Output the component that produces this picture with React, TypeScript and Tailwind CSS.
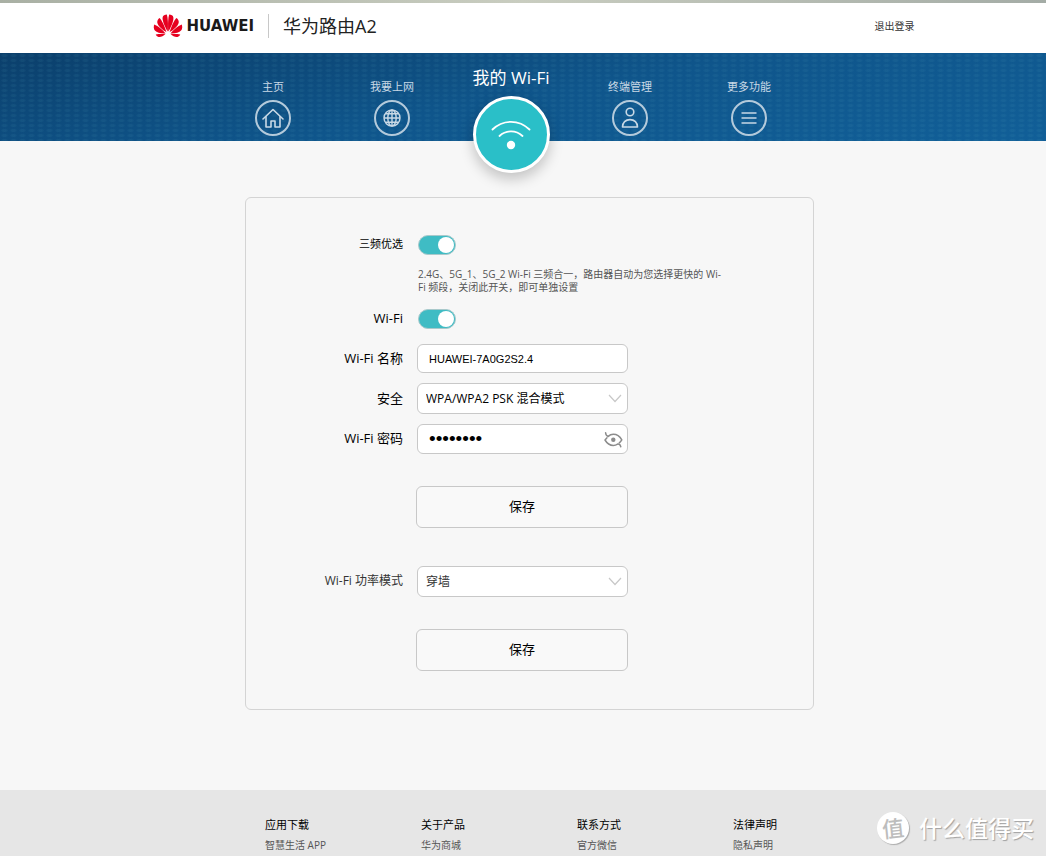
import React from 'react';

const NAV_ITEMS = [
  { label: '主页', icon: 'home' },
  { label: '我要上网', icon: 'globe' },
  { label: '我的 Wi-Fi', icon: 'wifi' },
  { label: '终端管理', icon: 'user' },
  { label: '更多功能', icon: 'menu' },
];

const FOOTER_COLUMNS = [
  { title: '应用下载', link: '智慧生活 APP' },
  { title: '关于产品', link: '华为商城' },
  { title: '联系方式', link: '官方微信' },
  { title: '法律声明', link: '隐私声明' },
];

const HuaweiMark: React.FC = () => (
  <svg width="30" height="24" viewBox="0 0 30 24" fill="#e6001f" aria-hidden="true">
    <path d="M14.7 17.6C12 13 9.2 6.8 9.6 3.4C9.9 1.5 12 .7 13.8 .6C15 4 15.2 12 14.7 17.6Z" />
    <path d="M15.3 17.6C18 13 20.8 6.8 20.4 3.4C20.1 1.5 18 .7 16.2 .6C15 4 14.8 12 15.3 17.6Z" />
    <path d="M13.4 18.2C10 16.3 5 12.4 4.3 8.8C4 6.6 5 4.9 6.7 4C9.2 7.2 12 13 13.4 18.2Z" />
    <path d="M16.6 18.2C20 16.3 25 12.4 25.7 8.8C26 6.6 25 4.9 23.3 4C20.8 7.2 18 13 16.6 18.2Z" />
    <path d="M12.6 19.4C9 19.8 3.8 18.9 1.9 16.6C.5 14.7 .5 12.3 1.3 10.4C5 11.9 9.8 15.8 12.6 19.4Z" />
    <path d="M17.4 19.4C21 19.8 26.2 18.9 28.1 16.6C29.5 14.7 29.5 12.3 28.7 10.4C25 11.9 20.2 15.8 17.4 19.4Z" />
    <path d="M12.4 20.2C10.3 22 7.5 23.5 5.5 22.9C4.1 22.5 3.2 21.5 2.7 20.4C5.8 20 9.4 20 12.4 20.2Z" />
    <path d="M17.6 20.2C19.7 22 22.5 23.5 24.5 22.9C25.9 22.5 26.8 21.5 27.3 20.4C24.2 20 20.6 20 17.6 20.2Z" />
  </svg>
);

const NavIcon: React.FC<{ name: string }> = ({ name }) => {
  if (name === 'home') {
    return (
      <svg width="22" height="20" viewBox="0 0 22 20" fill="none" stroke="currentColor" strokeWidth="1.6" strokeLinejoin="round" strokeLinecap="round">
        <path d="M1 11L11 1.5L21 11" />
        <path d="M4 8.8V19H9V13H13V19H18V8.8" />
      </svg>
    );
  }
  if (name === 'globe') {
    return (
      <svg width="18" height="18" viewBox="0 0 18 18" fill="none" stroke="currentColor" strokeWidth="1.4">
        <circle cx="9" cy="9" r="8" />
        <ellipse cx="9" cy="9" rx="4.2" ry="8" />
        <path d="M9 1V17M1 9H17M2.4 4.8H15.6M2.4 13.2H15.6" />
      </svg>
    );
  }
  if (name === 'user') {
    return (
      <svg width="18" height="22" viewBox="0 0 18 22" fill="none" stroke="currentColor" strokeWidth="1.6" strokeLinejoin="round">
        <circle cx="9" cy="5" r="3.8" />
        <path d="M1.5 20C1.5 15.6 4.6 12.6 9 12.6C13.4 12.6 16.5 15.6 16.5 20Z" />
      </svg>
    );
  }
  if (name === 'menu') {
    return (
      <svg width="16" height="14" viewBox="0 0 16 14" fill="none" stroke="currentColor" strokeWidth="1.7">
        <path d="M.5 2H15.5M.5 7H15.5M.5 12H15.5" />
      </svg>
    );
  }
  return (
    <svg width="40" height="32" viewBox="0 0 40 32" fill="none" stroke="currentColor" strokeWidth="1.8" strokeLinecap="round">
      <path d="M1.5 10.5C12 .2 28 .2 38.5 10.5" />
      <path d="M8.5 17C15 10.8 25 10.8 31.5 17" />
      <circle cx="20" cy="26" r="4.2" fill="currentColor" stroke="none" />
    </svg>
  );
};

const NavItem: React.FC<{ label: string; icon: string }> = ({ label, icon }) => {
  if (icon === 'wifi') {
    return (
      <a href="#wifi" aria-current="page" className="-mb-8 flex flex-1 flex-col items-center pt-[13px] text-white">
        <span className="text-[17px] leading-6 whitespace-nowrap">{label}</span>
        <span className="mt-[6px] flex size-[77px] items-center justify-center rounded-full border-[3px] border-white bg-[#2abfc8] shadow-[0_6px_14px_rgba(0,0,0,0.22)]">
          <NavIcon name={icon} />
        </span>
      </a>
    );
  }
  return (
    <a href={`#${icon}`} className="flex flex-1 flex-col items-center pt-[26px] text-[#c9d9e6]">
      <span className="text-[11px] leading-4 whitespace-nowrap">{label}</span>
      <span className="mt-[5px] flex size-9 items-center justify-center rounded-full border-2 border-[#b4cadb]">
        <NavIcon name={icon} />
      </span>
    </a>
  );
};

const Row: React.FC<{ id?: string; label?: string; labelClass?: string; className?: string; children: React.ReactNode }> = ({
  id,
  label,
  labelClass = 'text-[13px]',
  className = '',
  children,
}) => (
  <div className={`flex items-center ${className}`}>
    {label ? (
      <label htmlFor={id} className={`w-[157px] shrink-0 pb-[2px] text-right leading-5 ${labelClass}`}>
        {label}
      </label>
    ) : (
      <div className="w-[157px] shrink-0" />
    )}
    <div className="ml-[13px] w-[212px]">{children}</div>
  </div>
);

const Toggle: React.FC<{ id: string }> = ({ id }) => (
  <input
    id={id}
    type="checkbox"
    role="switch"
    defaultChecked
    className="ml-[2px] block h-5 w-[38px] cursor-pointer appearance-none rounded-full border border-[#a9c9cb] bg-[#b8b8b8] px-px before:block before:size-4 before:translate-y-px before:rounded-full before:bg-white checked:bg-[#3fbcc4] checked:before:ml-auto"
  />
);

const SelectBox: React.FC<{ id: string; option: string; className: string }> = ({ id, option, className }) => (
  <div className="relative ml-px">
    <select
      id={id}
      className={`block h-[31px] w-full appearance-none rounded-md border border-[#c8c8c8] bg-white pr-8 pl-2 text-xs ${className}`}
    >
      <option>{option}</option>
    </select>
    <svg width="14" height="9" viewBox="0 0 14 9" fill="none" stroke="#c8c8c8" strokeWidth="1.2" className="pointer-events-none absolute top-[11px] right-[6px]">
      <path d="M1 1L7 7.5L13 1" />
    </svg>
  </div>
);

const SaveButton: React.FC = () => (
  <button type="button" className="block h-[42px] w-full rounded-md border border-[#c8c8c8] bg-[#f9f9f9] text-[13px] text-black">
    保存
  </button>
);

const App: React.FC = () => {
  return (
    <div className="flex min-h-screen flex-col bg-[#f7f7f7] font-['Open_Sans','Noto_Sans_CJK_SC',sans-serif] text-black">
      <div className="h-[3px] bg-linear-to-r from-[#a9b0a4] via-[#c9cdc0] to-[#a4aca6]" />
      <header className="bg-white pl-[21px]">
        <div className="mx-auto flex h-[50px] max-w-[762px] items-center justify-between pb-1">
          <div className="flex items-center">
            <HuaweiMark />
            <span className="ml-1 font-['DejaVu_Sans',sans-serif] text-[15px] font-bold text-[#1a1a1a]">HUAWEI</span>
            <span className="mx-[14px] h-6 w-px bg-[#c8c8c8]" />
            <h1 className="text-lg text-[#222]">华为路由A2</h1>
          </div>
          <a href="#logout" className="text-[10px] text-[#333]">退出登录</a>
        </div>
      </header>

      <nav className="bg-linear-170 from-[#0b3f6b] via-[#0f558b] to-[#115f98]">
        <div className="bg-[radial-gradient(ellipse,rgba(90,170,190,0.09)_30%,transparent_60%)] bg-size-[9px_5px] pr-6">
          <div className="mx-auto flex h-[88px] max-w-[595px]">
            {NAV_ITEMS.map((item) => (
              <NavItem key={item.icon} label={item.label} icon={item.icon} />
            ))}
          </div>
        </div>
      </nav>

      <main className="mt-14 mb-20 pl-[13px]">
        <form className="mx-auto max-w-[569px] rounded-md border border-[#d4d4d4] pt-9 pb-[38px]">
          <Row id="tri-band" label="三频优选" labelClass="text-[11px]">
            <Toggle id="tri-band" />
          </Row>
          <p className="mt-3 ml-[172px] w-[304px] text-[10px] leading-[13px] text-[#555]">
            2.4G、5G_1、5G_2 Wi-Fi 三频合一，路由器自动为您选择更快的 Wi-Fi 频段，关闭此开关，即可单独设置
          </p>
          <Row id="wifi-on" label="Wi-Fi" className="mt-[14px]">
            <Toggle id="wifi-on" />
          </Row>
          <Row id="ssid" label="Wi-Fi 名称" className="mt-[14px]">
            <div className="ml-px">
              <input
                id="ssid"
                type="text"
                defaultValue="HUAWEI-7A0G2S2.4"
                className="block h-[29px] w-full rounded-md border border-[#c8c8c8] bg-white px-[11px] font-['Liberation_Sans',sans-serif] text-[11px]"
              />
            </div>
          </Row>
          <Row id="security" label="安全" className="mt-[10px]">
            <SelectBox id="security" option="WPA/WPA2 PSK 混合模式" className="text-black" />
          </Row>
          <Row id="password" label="Wi-Fi 密码" className="mt-[10px]">
            <div className="relative ml-px">
              <input
                id="password"
                type="password"
                defaultValue="12345678"
                className="block h-[30px] w-full rounded-md border border-[#c8c8c8] bg-white pr-8 pl-[11px] font-['Liberation_Sans',sans-serif] text-[19px]"
              />
              <button type="button" aria-label="显示密码" className="absolute top-[7px] right-[5px] text-[#8c8c8c]">
                <svg width="19" height="17" viewBox="0 0 19 17" fill="none" stroke="currentColor" strokeWidth="1.5" strokeLinecap="round" strokeLinejoin="round">
                  <path d="M1.6 1.8C1.7 3.8 2.6 5 4.2 5.4C5.6 4 7.2 3.2 9.3 3.2C13 3.2 15.9 5.4 17.8 8.8C17.1 10 16.3 11 15.3 11.8" />
                  <path d="M3 6.8L1 9C3 12.4 5.8 14.4 9.3 14.4C11 14.4 12.4 13.9 13.6 13.1C15 12.8 16.3 13.8 16.8 15.8" />
                  <circle cx="9.3" cy="8.8" r="2.2" fill="currentColor" stroke="none" />
                </svg>
              </button>
            </div>
          </Row>
          <Row className="mt-8">
            <SaveButton />
          </Row>
          <Row id="power" label="Wi-Fi 功率模式" labelClass="text-xs text-[#333]" className="mt-[38px]">
            <SelectBox id="power" option="穿墙" className="text-[#333]" />
          </Row>
          <Row className="mt-8">
            <SaveButton />
          </Row>
        </form>
      </main>

      <footer className="relative grow bg-[#e6e6e6]">
        <div className="mx-auto grid max-w-[624px] grid-cols-4 pt-[25px]">
          {FOOTER_COLUMNS.map((col) => (
            <div key={col.title} className="pl-[54px] whitespace-nowrap">
              <h2 className="text-[11px] leading-5">{col.title}</h2>
              <a href="#" className="block text-[10px] leading-5 text-[#555]">{col.link}</a>
            </div>
          ))}
        </div>
        <div className="absolute top-[22px] right-3 flex items-center gap-[10px] text-white">
          <span className="flex size-8 items-center justify-center rounded-full bg-white shadow-[1px_1px_1px_rgba(0,0,0,0.25)]">
            <span className="-rotate-6 text-[22px] leading-none font-medium text-[#bdbdbd]">值</span>
          </span>
          <span className="text-[23px] leading-8 font-medium whitespace-nowrap [text-shadow:1px_1px_1px_rgba(0,0,0,0.3)]">什么值得买</span>
        </div>
      </footer>
    </div>
  );
};

export default App;
